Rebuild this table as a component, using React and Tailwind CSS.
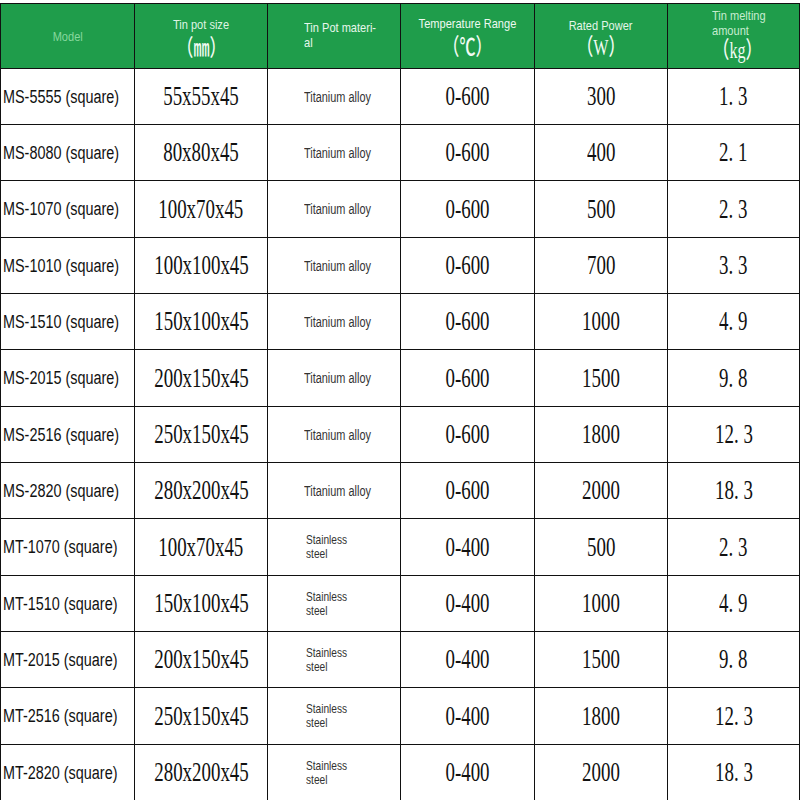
import React from "react";

const rows = [
  ["MS-5555 (square)", "55x55x45", "Titanium alloy", "0-600", "300", "1. 3"],
  ["MS-8080 (square)", "80x80x45", "Titanium alloy", "0-600", "400", "2. 1"],
  ["MS-1070 (square)", "100x70x45", "Titanium alloy", "0-600", "500", "2. 3"],
  ["MS-1010 (square)", "100x100x45", "Titanium alloy", "0-600", "700", "3. 3"],
  ["MS-1510 (square)", "150x100x45", "Titanium alloy", "0-600", "1000", "4. 9"],
  ["MS-2015 (square)", "200x150x45", "Titanium alloy", "0-600", "1500", "9. 8"],
  ["MS-2516 (square)", "250x150x45", "Titanium alloy", "0-600", "1800", "12. 3"],
  ["MS-2820 (square)", "280x200x45", "Titanium alloy", "0-600", "2000", "18. 3"],
  ["MT-1070 (square)", "100x70x45", "Stainless|steel", "0-400", "500", "2. 3"],
  ["MT-1510 (square)", "150x100x45", "Stainless|steel", "0-400", "1000", "4. 9"],
  ["MT-2015 (square)", "200x150x45", "Stainless|steel", "0-400", "1500", "9. 8"],
  ["MT-2516 (square)", "250x150x45", "Stainless|steel", "0-400", "1800", "12. 3"],
  ["MT-2820 (square)", "280x200x45", "Stainless|steel", "0-400", "2000", "18. 3"],
];

const sans = { fontFamily: '"Liberation Sans", Arial, sans-serif' };
const serif = { fontFamily: '"Liberation Serif", "Times New Roman", serif' };
const unit = { fontFamily: '"Liberation Serif", "Noto Sans CJK SC", serif' };

function Big({ children }) {
  return (
    <span
      className="inline-block text-[27px] leading-none text-[#111] scale-x-[0.7] whitespace-nowrap"
      style={serif}
    >
      {children}
    </span>
  );
}

function HeadSmall({ children, className = "" }) {
  return (
    <span
      className={"inline-block text-[13px] leading-[15px] scale-x-[0.85] whitespace-nowrap " + className}
      style={sans}
    >
      {children}
    </span>
  );
}

function HeadUnit({ children }) {
  return (
    <span
      className="inline-block text-[23px] leading-none font-medium text-[#f2fbf4] scale-x-[0.7] whitespace-nowrap"
      style={unit}
    >
      {children}
    </span>
  );
}

export default function App() {
  const cell = "border-r border-b border-[#111] bg-white flex items-center";
  const hcell = "border-r border-b border-[#111] bg-[#1f9d4b] flex flex-col items-center";
  return (
    <div className="w-[800px] h-[800px] bg-white pt-[3px] overflow-hidden">
      <div className="grid grid-cols-[134px_133px_133px_134px_133px_132px] border-l border-t border-[#111] w-[800px]">
        <div className={hcell + " justify-center h-[65px]"}>
          <HeadSmall className="text-[#86d89d]">Model</HeadSmall>
        </div>
        <div className={hcell + " h-[65px] pt-[13px]"}>
          <HeadSmall className="text-[#dff4e4]">Tin pot size</HeadSmall>
          <div className="mt-[5px]">
            <HeadUnit>（㎜）</HeadUnit>
          </div>
        </div>
        <div className={hcell + " h-[65px] pt-[16px] items-start pl-[36px]"}>
          <HeadSmall className="text-[#e8f7ec] origin-left">Tin Pot materi-</HeadSmall>
          <HeadSmall className="text-[#e8f7ec] origin-left">al</HeadSmall>
        </div>
        <div className={hcell + " h-[65px] pt-[12px]"}>
          <HeadSmall className="text-[#eef9f1]">Temperature Range</HeadSmall>
          <div className="mt-[5px]">
            <HeadUnit>（℃）</HeadUnit>
          </div>
        </div>
        <div className={hcell + " h-[65px] pt-[14px]"}>
          <HeadSmall className="text-[#e4f6e9]">Rated Power</HeadSmall>
          <div className="mt-[3px]">
            <HeadUnit>（W）</HeadUnit>
          </div>
        </div>
        <div className={hcell + " h-[65px] pt-[4px] items-start pl-[44px]"}>
          <HeadSmall className="text-[#c6ecd0] origin-left">Tin melting</HeadSmall>
          <HeadSmall className="text-[#c6ecd0] origin-left">amount</HeadSmall>
          <div className="-ml-[9px] mt-[1px]">
            <HeadUnit>（kg）</HeadUnit>
          </div>
        </div>

        {rows.map((r, i) => {
          const h = i % 3 === 2 ? "h-[57px]" : "h-[56px]";
          const mat = r[2].split("|");
          return (
            <React.Fragment key={i}>
              <div className={cell + " " + h + " pl-[2px]"}>
                <span
                  className="inline-block origin-left scale-x-[0.8] text-[18px] leading-none text-[#111] whitespace-nowrap"
                  style={sans}
                >
                  {r[0]}
                </span>
              </div>
              <div className={cell + " " + h + " justify-center"}>
                <Big>{r[1]}</Big>
              </div>
              <div className={cell + " " + h + (mat.length > 1 ? " pl-[38px]" : " pl-[36px]")}>
                <div className="flex flex-col">
                  {mat.map((m, j) => (
                    <span
                      key={j}
                      className={
                        "inline-block origin-left scale-x-[0.78] text-[#333] whitespace-nowrap " +
                        (mat.length > 1 ? "text-[13px] leading-[14px]" : "text-[14px] leading-[14px]")
                      }
                      style={sans}
                    >
                      {m}
                    </span>
                  ))}
                </div>
              </div>
              <div className={cell + " " + h + " justify-center"}>
                <Big>{r[3]}</Big>
              </div>
              <div className={cell + " " + h + " justify-center"}>
                <Big>{r[4]}</Big>
              </div>
              <div className={cell + " " + h + " justify-center"}>
                <Big>{r[5]}</Big>
              </div>
            </React.Fragment>
          );
        })}
      </div>
    </div>
  );
}
